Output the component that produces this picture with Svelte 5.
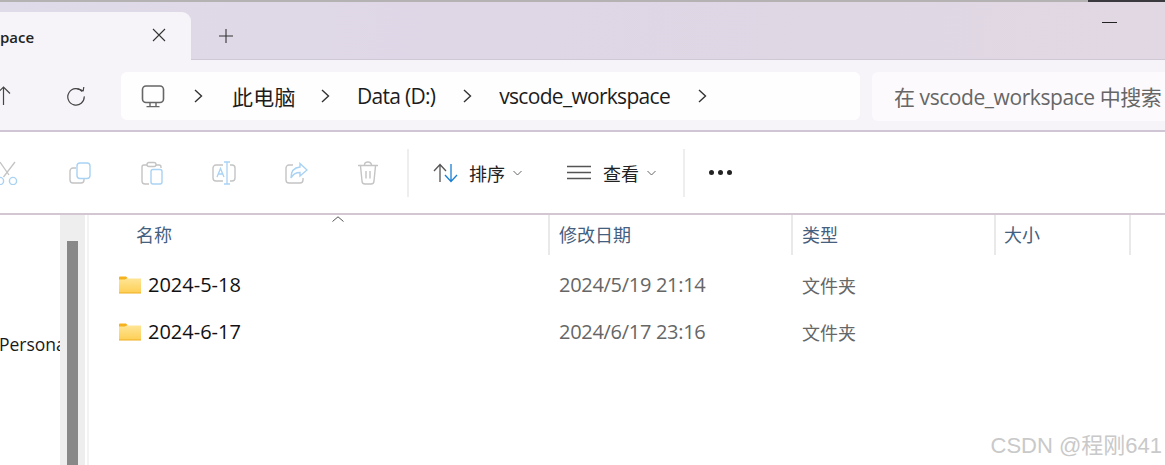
<script>
  const crumbs = [
    { text: "此电脑", cjk: true },
    { text: "Data (D:)", cjk: false },
    { text: "vscode_workspace", cjk: false },
  ];
  const columns = [
    { name: "名称", width: 460, pad: 46 },
    { name: "修改日期", width: 243, pad: 9 },
    { name: "类型", width: 203, pad: 9 },
    { name: "大小", width: 135, pad: 8 },
  ];
  const folders = [
    { name: "2024-5-18", date: "2024/5/19 21:14", type: "文件夹" },
    { name: "2024-6-17", date: "2024/6/17 23:16", type: "文件夹" },
  ];
</script>

<div class="window">
  <div class="strip">
    <span class="strip-gray"></span>
    <span class="strip-dark"></span>
  </div>

  <!-- Tabs -->
  <div class="tabbar">
    <div class="tab">
      <span class="tab-title">pace</span>
      <svg class="tab-close" width="14" height="14" viewBox="0 0 14 14">
        <path d="M1 1 L13 13 M13 1 L1 13" stroke="#333" stroke-width="1.1" fill="none" />
      </svg>
    </div>
    <svg class="tab-add" width="16" height="16" viewBox="0 0 16 16">
      <path d="M8 1 V15 M1 8 H15" stroke="#333" stroke-width="1.1" fill="none" />
    </svg>
    <div class="minimize"></div>
  </div>

  <!-- Address row -->
  <div class="navbar">
    <div class="nav-buttons">
      <svg width="16" height="20" viewBox="0 0 16 20">
        <path d="M3.5 1 V19 M-3 7.5 L3.5 1 L10 7.5" stroke="#444" stroke-width="1.2" fill="none" />
      </svg>
      <svg class="refresh" width="20" height="20" viewBox="0 0 20 20">
        <path d="M16.3 5.6 A8.2 8.2 0 1 0 18.2 10.4" stroke="#444" stroke-width="1.2" fill="none" />
        <path d="M11.5 2.8 L17.2 4.8 L17.8 1" stroke="#444" stroke-width="1.2" fill="none" />
      </svg>
    </div>
    <div class="address">
      <svg class="pc" width="24" height="23" viewBox="0 0 24 23">
        <rect x="1.5" y="1" width="21" height="16.5" rx="3.5" stroke="#666" stroke-width="1.6" fill="none" />
        <path d="M9 18 V21 M15 18 V21 M5.5 21.6 H18.5" stroke="#666" stroke-width="1.4" fill="none" />
      </svg>
      <svg class="chev first" width="9" height="14" viewBox="0 0 9 14">
        <path d="M1 1 L7.5 7 L1 13" stroke="#333" stroke-width="1.4" fill="none" />
      </svg>
      {#each crumbs as crumb}
        <span class="crumb" class:cjk={crumb.cjk}>{crumb.text}</span>
        <svg class="chev" width="9" height="14" viewBox="0 0 9 14">
          <path d="M1 1 L7.5 7 L1 13" stroke="#333" stroke-width="1.4" fill="none" />
        </svg>
      {/each}
    </div>
    <div class="search">在 vscode_workspace 中搜索</div>
  </div>

  <!-- Command bar -->
  <div class="toolbar">
    <div class="disabled-tools">
      <svg width="20" height="24" viewBox="0 0 20 24">
        <path d="M15 1 L3.5 16 M0 1 L9 14" stroke="#c4c4c4" stroke-width="1.3" fill="none" />
        <circle cx="0" cy="20" r="3.6" stroke="#a9d2f3" stroke-width="1.4" fill="none" />
        <circle cx="13" cy="20" r="3.6" stroke="#a9d2f3" stroke-width="1.4" fill="none" />
      </svg>
      <svg class="copy" width="22" height="22" viewBox="0 0 22 22">
        <path d="M7 6 H4 A3 3 0 0 0 1 9 V18 A3 3 0 0 0 4 21 H12 A3 3 0 0 0 15 18 V17" stroke="#c4c4c4" stroke-width="1.4" fill="none" />
        <rect x="8" y="1" width="13" height="15.5" rx="3" stroke="#a9d2f3" stroke-width="1.4" fill="none" />
      </svg>
      <svg width="22" height="24" viewBox="0 0 22 24">
        <path d="M15 4 H18 A2 2 0 0 1 20 6 V7 M8 23 H4 A3 3 0 0 1 1 20 V6 A2 2 0 0 1 3 4 H6" stroke="#c4c4c4" stroke-width="1.4" fill="none" />
        <rect x="6" y="1.5" width="9" height="4" rx="2" stroke="#c4c4c4" stroke-width="1.4" fill="none" />
        <rect x="10" y="8.5" width="11" height="14.5" rx="2" stroke="#a9d2f3" stroke-width="1.4" fill="none" />
      </svg>
      <svg width="24" height="24" viewBox="0 0 24 24">
        <path d="M11 4 H4 A3 3 0 0 0 1 7 V17 A3 3 0 0 0 4 20 H11 M18 4 H20 A3 3 0 0 1 23 7 V17 A3 3 0 0 1 20 20 H18" stroke="#c4c4c4" stroke-width="1.4" fill="none" />
        <path d="M12 1 H18 M15 1 V23 M12 23 H18 M5 16 L8.5 7.5 L12 16 M6.2 13 H10.8" stroke="#a9d2f3" stroke-width="1.3" fill="none" />
      </svg>
      <svg width="23" height="22" viewBox="0 0 23 22">
        <path d="M8 3 H4 A3 3 0 0 0 1 6 V18 A3 3 0 0 0 4 21 H15 A3 3 0 0 0 18 18 V16" stroke="#c4c4c4" stroke-width="1.4" fill="none" />
        <path d="M15 1.5 L22 8 L15 14 V10.5 C11 10.5 8 12 6 16 C6 10 9 5.5 15 5 Z" stroke="#a9d2f3" stroke-width="1.4" fill="none" />
      </svg>
      <svg width="22" height="24" viewBox="0 0 22 24">
        <path d="M1 4.5 H21 M7.5 4 A3.5 3 0 0 1 14.5 4 M3.5 5 L5 20 A3 3 0 0 0 8 23 H14 A3 3 0 0 0 17 20 L18.5 5 M9 10 V17.5 M13 10 V17.5" stroke="#c4c4c4" stroke-width="1.4" fill="none" />
      </svg>
    </div>
    <div class="sep"></div>
    <div class="cmd sort">
      <svg width="25" height="20" viewBox="0 0 25 20">
        <path d="M7 19 V1.5 M1 8 L7 1.5 L13 8" stroke="#555" stroke-width="1.3" fill="none" />
        <path d="M18 1 V18.5 M12 12 L18 18.5 L24 12" stroke="#1a7fd4" stroke-width="1.3" fill="none" />
      </svg>
      <span>排序</span>
      <svg class="caret" width="9" height="6" viewBox="0 0 9 6">
        <path d="M0.5 1 L4.5 5 L8.5 1" stroke="#666" stroke-width="1" fill="none" />
      </svg>
    </div>
    <div class="cmd view">
      <svg width="24" height="15" viewBox="0 0 24 15">
        <path d="M0 1.5 H24 M0 7.5 H24 M0 13.5 H24" stroke="#555" stroke-width="1.3" fill="none" />
      </svg>
      <span>查看</span>
      <svg class="caret" width="9" height="6" viewBox="0 0 9 6">
        <path d="M0.5 1 L4.5 5 L8.5 1" stroke="#666" stroke-width="1" fill="none" />
      </svg>
    </div>
    <div class="sep"></div>
    <div class="more"><i></i><i></i><i></i></div>
  </div>

  <!-- Files -->
  <div class="main">
    <div class="sidebar">
      <div class="side-text"><span>Personal</span></div>
      <div class="track"><div class="thumb"></div></div>
      <div class="edge"></div>
    </div>
    <div class="list">
      <div class="head">
        {#each columns as col}
          <div class="head-cell" style="width: {col.width}px; padding-left: {col.pad}px">{col.name}</div>
        {/each}
        <svg class="sort-mark" width="12" height="6" viewBox="0 0 12 6">
          <path d="M0.5 5.5 L6 0.8 L11.5 5.5" stroke="#555" stroke-width="1" fill="none" />
        </svg>
      </div>
      <div class="rows">
        {#each folders as row}
          <div class="row">
            <div class="name-cell">
              <svg width="22" height="18" viewBox="0 0 22 18">
                <defs>
                  <linearGradient id="fold" x1="0" y1="0" x2="0" y2="1">
                    <stop offset="0" stop-color="#ffe596" />
                    <stop offset="1" stop-color="#fdcf55" />
                  </linearGradient>
                </defs>
                <path d="M0 1.5 A1 1 0 0 1 1 0.5 H7 L9 2.5 H8 L6 4 H0 Z" fill="#f6b21c" />
                <path d="M0 3.6 H6 L8.3 2.4 H22 V17 H0 Z" fill="url(#fold)" />
                <path d="M0 16.5 H22 V17.5 H0 Z" fill="#eeae20" />
              </svg>
              <span>{row.name}</span>
            </div>
            <div class="date-cell">{row.date}</div>
            <div class="type-cell">{row.type}</div>
          </div>
        {/each}
      </div>
    </div>
  </div>

  <div class="watermark">CSDN @程刚641</div>
</div>

<style>
  :global(body) {
    margin: 0;
    overflow: hidden;
  }

  .window {
    position: relative;
    width: 1165px;
    height: 465px;
    overflow: hidden;
    background: #fff;
    font-family: "Open Sans", "Noto Sans CJK SC", sans-serif;
    color: #1a1a1a;
  }

  .strip {
    display: flex;
    height: 2px;
    background: #b5b2b4;
  }

  .strip-gray {
    width: 1088px;
  }

  .strip-dark {
    flex: 1;
    background: #3a3a3e;
  }

  .tabbar {
    display: flex;
    align-items: flex-start;
    height: 57px;
    background: linear-gradient(100deg, #dfdbe8, #dfd6e6 45%, #e1d8e3);
    border-bottom: 1px solid #cfc9d6;
  }

  .tab {
    display: flex;
    align-items: center;
    justify-content: space-between;
    box-sizing: border-box;
    width: 191px;
    height: 48px;
    margin-top: 10px;
    padding: 0 25px 2px 0;
    background: #f6f4f9;
    border-radius: 0 9px 0 0;
    margin-bottom: -1px;
  }

  .tab-title {
    font-size: 15px;
    font-weight: 600;
    margin-top: 3px;
    color: #222;
  }

  .tab-close {
    margin-top: 0;
  }

  .tab-add {
    margin: 26px 0 0 27px;
  }

  .minimize {
    width: 15px;
    height: 1px;
    margin: 20px 0 0 868px;
    background: #222;
  }

  .navbar {
    display: flex;
    align-items: center;
    height: 70px;
    padding-top: 2px;
    box-sizing: border-box;
    background: #f7f4f9;
  }

  .nav-buttons {
    display: flex;
    align-items: center;
    width: 121px;
    flex-shrink: 0;
  }

  .refresh {
    margin-left: 50px;
  }

  .address {
    display: flex;
    align-items: center;
    width: 739px;
    height: 48px;
    flex-shrink: 0;
    background: #fffeff;
    border-radius: 6px;
    font-size: 21px;
  }

  .pc {
    margin-left: 20px;
  }

  .chev {
    margin: 0 27px 0 25px;
  }

  .chev.first {
    margin: 0 29px;
  }

  .crumb {
    margin-right: 3px;
    color: #1c1c1c;
    letter-spacing: -0.7px;
  }

  .crumb.cjk {
    margin-right: 0;
    letter-spacing: 0.3px;
  }

  .search {
    display: flex;
    align-items: center;
    width: 293px;
    height: 49px;
    flex-shrink: 0;
    margin-left: 12px;
    padding-left: 22px;
    box-sizing: border-box;
    background: #fcfafc;
    border-radius: 6px 0 0 6px;
    color: #666;
    font-size: 21px;
    letter-spacing: -0.43px;
    white-space: nowrap;
    overflow: hidden;
  }

  .toolbar {
    display: flex;
    align-items: center;
    height: 85px;
    box-sizing: border-box;
    border-top: 2px solid #cfc5d5;
    border-bottom: 2px solid #d2c7d3;
  }

  .disabled-tools {
    display: flex;
    align-items: center;
    width: 407px;
    flex-shrink: 0;
    gap: 49px;
  }

  .copy {
    margin-right: 1px;
  }

  .sep {
    width: 2px;
    height: 48px;
    background: #eee;
    flex-shrink: 0;
  }

  .cmd {
    display: flex;
    align-items: center;
    font-size: 18px;
    color: #222;
  }

  .cmd span {
    margin-left: 11px;
  }

  .caret {
    margin-left: 8px;
  }

  .sort {
    margin-left: 24px;
    width: 134px;
  }

  .view {
    width: 116px;
  }

  .view span {
    margin-left: 12px;
  }

  .more {
    display: flex;
    gap: 4px;
    margin-left: 24px;
  }

  .more i {
    display: block;
    width: 5px;
    height: 5px;
    border-radius: 50%;
    background: #222;
  }

  .main {
    display: flex;
    height: 250px;
  }

  .sidebar {
    display: flex;
    width: 90px;
    flex-shrink: 0;
  }

  .side-text {
    width: 60px;
    overflow: hidden;
    font-size: 17.5px;
    white-space: nowrap;
    padding-top: 115px;
    box-sizing: border-box;
    line-height: 28px;
  }

  .side-text span {
    margin-left: -1px;
  }

  .track {
    width: 25px;
    background: #eee;
    padding: 26px 7px 0;
    box-sizing: border-box;
  }

  .thumb {
    height: 100%;
    background: #888;
  }

  .edge {
    width: 2px;
    margin-left: 2px;
    background: #f3f3f3;
  }

  .list {
    flex: 1;
    min-width: 0;
  }

  .head {
    position: relative;
    display: flex;
    height: 40px;
  }

  .head-cell {
    box-sizing: border-box;
    display: flex;
    align-items: center;
    padding-bottom: 2px;
    border-right: 2px solid #e9e9e9;
    font-size: 18px;
    color: #44607e;
  }

  .sort-mark {
    position: absolute;
    left: 242px;
    top: 1px;
  }

  .rows {
    padding-top: 6px;
  }

  .row {
    display: flex;
    align-items: center;
    height: 47px;
    font-size: 18px;
  }

  .name-cell {
    display: flex;
    align-items: center;
    gap: 7px;
    width: 460px;
    padding-left: 29px;
    box-sizing: border-box;
    color: #111;
    font-size: 20px;
  }

  .date-cell {
    width: 243px;
    padding-left: 9px;
    box-sizing: border-box;
    color: #666;
    font-size: 20px;
    letter-spacing: -0.3px;
  }

  .type-cell {
    padding-left: 9px;
    color: #666;
  }

  .watermark {
    position: absolute;
    right: 3px;
    bottom: 6px;
    color: #c9c9c9;
    font-family: "Liberation Sans", "Noto Sans CJK SC", sans-serif;
    font-size: 22px;
    line-height: 26px;
    white-space: nowrap;
  }
</style>
